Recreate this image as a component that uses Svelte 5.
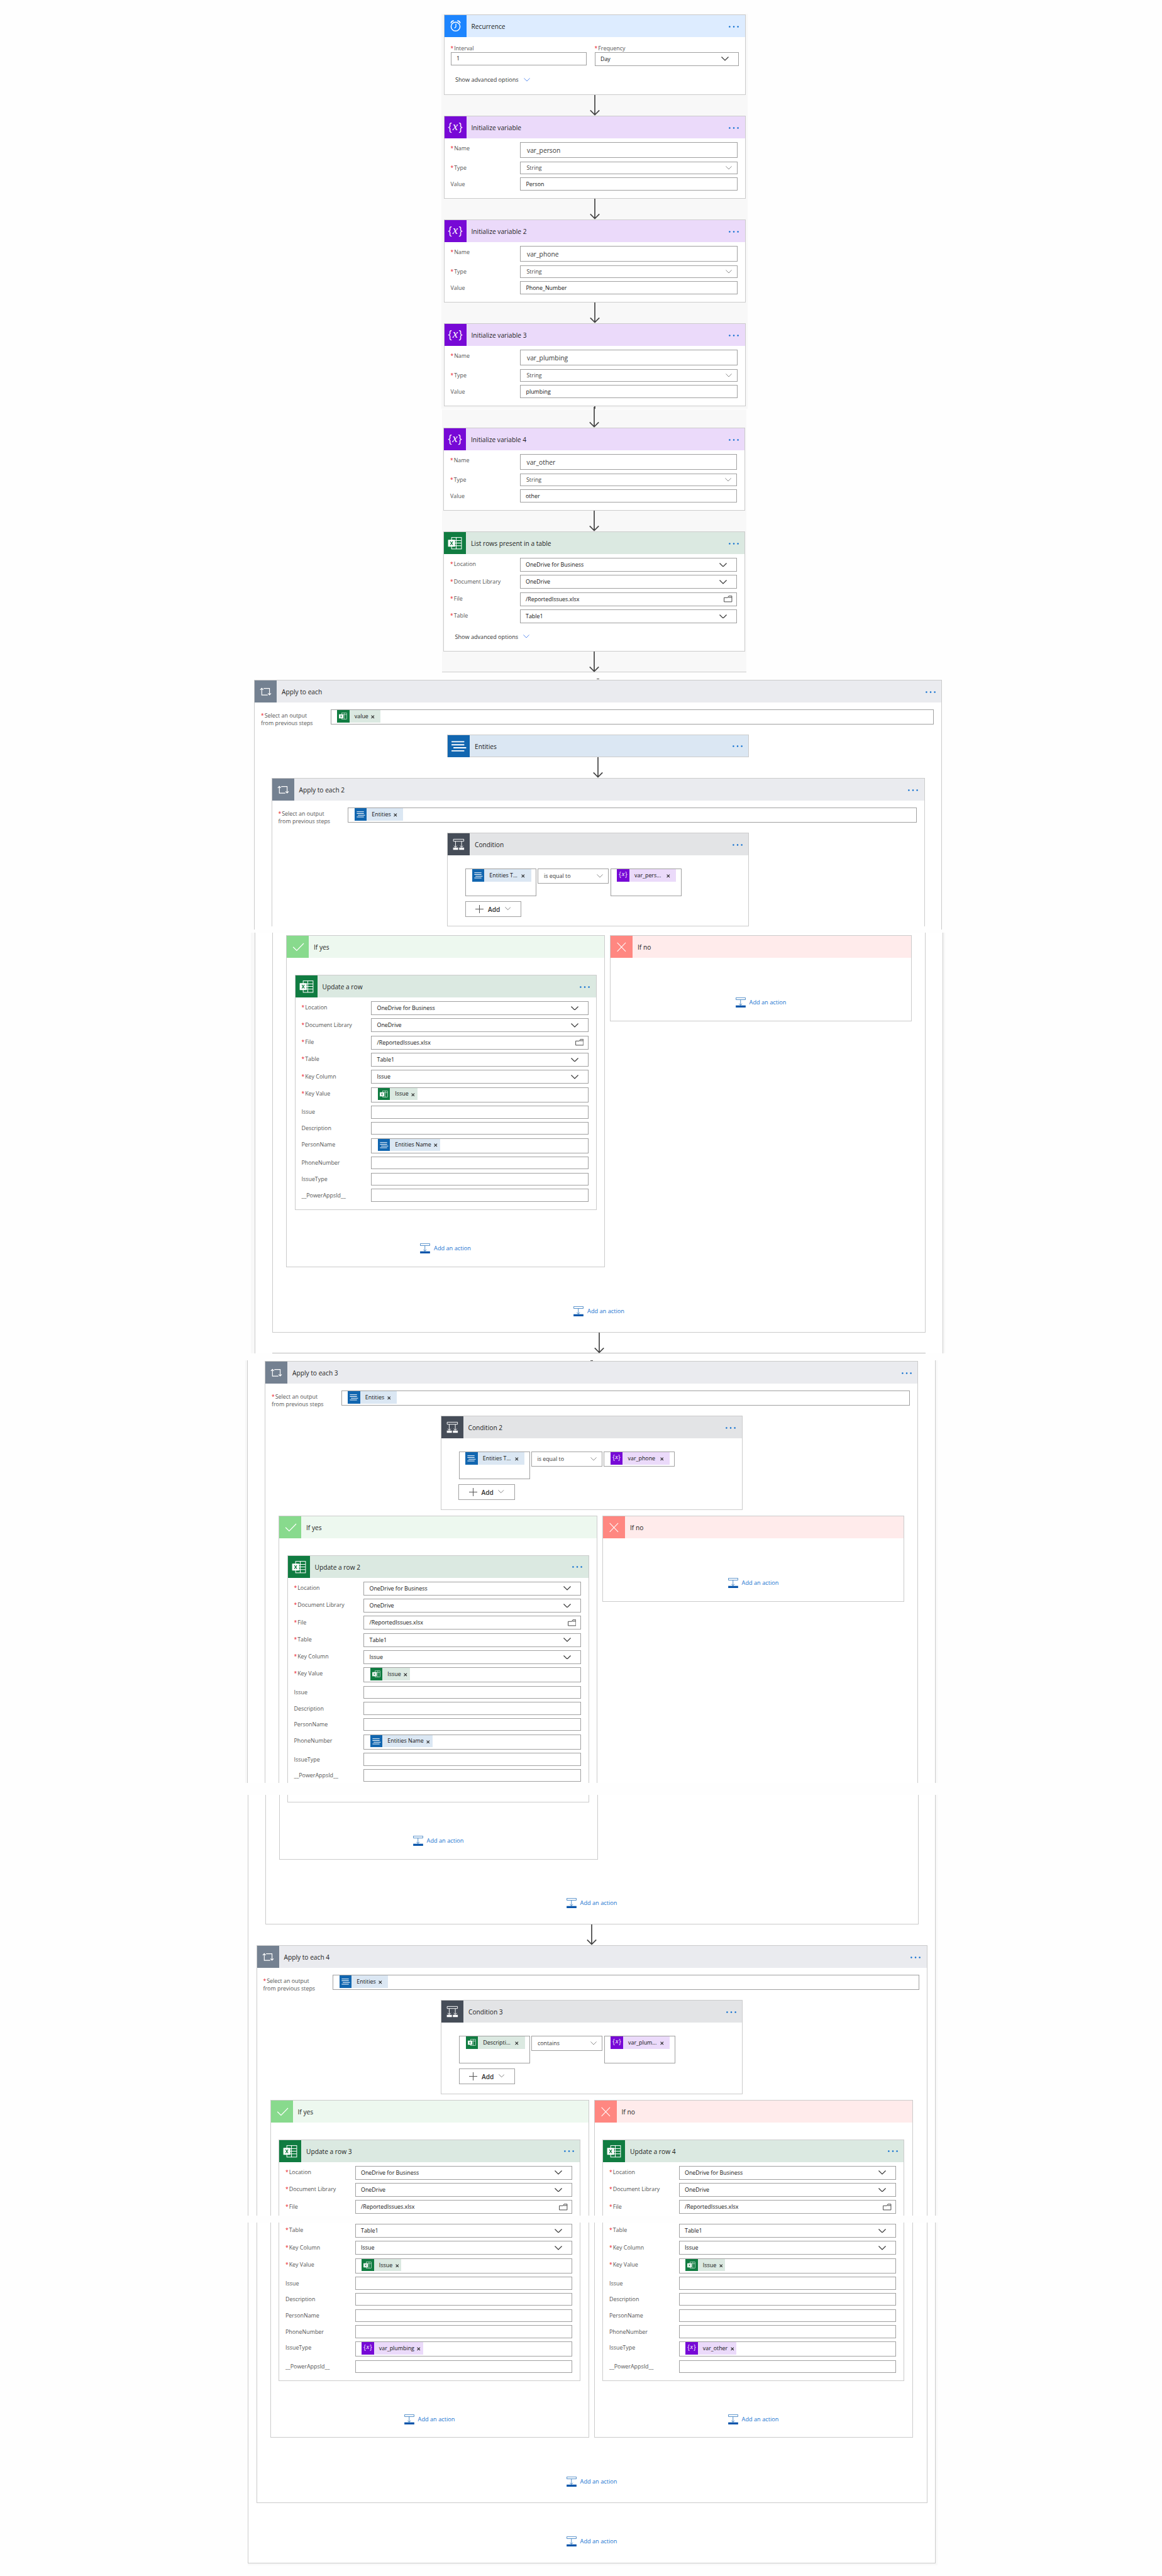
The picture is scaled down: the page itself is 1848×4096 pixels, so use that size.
<script>
  const variables = [
    { title: 'Initialize variable', name: 'var_person', value: 'Person' },
    { title: 'Initialize variable 2', name: 'var_phone', value: 'Phone_Number' },
    { title: 'Initialize variable 3', name: 'var_plumbing', value: 'plumbing' }
  ];
  const variable4 = { title: 'Initialize variable 4', name: 'var_other', value: 'other' };

  const issueToken = { kind: 'excel', text: 'Issue' };
  const entityName = { kind: 'entity', text: 'Entities Name' };

  const fileRows = [
    { label: 'Location', req: true, type: 'select', value: 'OneDrive for Business' },
    { label: 'Document Library', req: true, type: 'select', value: 'OneDrive' },
    { label: 'File', req: true, type: 'file', value: '/ReportedIssues.xlsx' }
  ];
  const tableRow = { label: 'Table', req: true, type: 'select', value: 'Table1' };

  // Column inputs of the "Update a row" action; `filled` maps a column to its token.
  function columnRows(filled) {
    return [
      tableRow,
      { label: 'Key Column', req: true, type: 'select', value: 'Issue' },
      { label: 'Key Value', req: true, type: 'token', token: issueToken },
      ...['Issue', 'Description', 'PersonName', 'PhoneNumber', 'IssueType', '__PowerAppsId__'].map((label) =>
        filled[label] ? { label, type: 'token', token: filled[label] } : { label, type: 'empty' }
      )
    ];
  }
</script>

{#snippet icon(kind)}
  {#if kind === 'variable'}
    <span class="braces"><b>&#123;</b><i>x</i><b>&#125;</b></span>
  {:else}
    <svg viewBox="0 0 69 69" fill="none" stroke="#fff">
      {#if kind === 'clock'}
        <circle cx="34.5" cy="36" r="14" stroke-width="3" />
        <path d="M35.5 27V37L31 41" stroke-width="2.6" />
        <path d="M20 25.5c1-4.500 5-7.500 9-7.500M49 25.500c-1-4.500-5-7.500-9-7.500" stroke-width="3.4" />
      {:else if kind === 'excel'}
        <rect x="24" y="17" width="31" height="36" stroke-width="2" />
        <path d="M24 26.500H55M24 34.500H55M24 43H55M38.500 17V53" stroke-width="2" />
        <rect x="13" y="24" width="22" height="22" rx="1" fill="#fff" stroke="none" />
        <path d="M20 29.500L28 40.500M28 29.500L20 40.500" stroke="#107c41" stroke-width="2.4" />
      {:else if kind === 'exceltoken'}
        <rect x="27" y="17" width="27" height="35" stroke-width="2" />
        <path d="M42 17V52M35 26H54" stroke-width="2" />
        <rect x="11" y="24" width="25" height="23" fill="#fff" stroke="none" />
        <path d="M19 30L27 41M27 30L19 41" stroke="#107c41" stroke-width="3.2" />
      {:else if kind === 'loop'}
        <path d="M22.300 25V45.500H41M17.500 29.500L22.300 24.300L27 29.500M28 25H46.500V44.500M41.700 40L46.500 45.200L51.300 40" stroke-width="2.300" />
      {:else if kind === 'entity'}
        <path d="M12 20.500H52M12 30H52M18 39.500H58M12 49.200H52" stroke-width="3.600" />
      {:else if kind === 'condition'}
        <path d="M18 18.500H50.500V25H18ZM24.500 25.500V43M43.500 25.500V43M19.500 39L24.500 44L29.500 39M38.500 39L43.500 44L48.500 39" stroke-width="1.900" />
        <path d="M17 45H32.800V51.800H17ZM36 45H51.500V51.800H36Z" fill="#fff" stroke="none" />
      {:else if kind === 'yes'}
        <path d="M20 35L31.300 46.300L53.300 23.700" stroke-width="2.300" />
      {:else if kind === 'no'}
        <path d="M21 21.500L47.500 49M47.500 21.500L21 49" stroke-width="2" />
      {/if}
    </svg>
  {/if}
{/snippet}

{#snippet header(kind, title, dots = true)}
  <header class="head {kind}">
    <span class="tile">{@render icon(kind)}</span>
    <h3>{title}</h3>
    {#if dots}
      <svg class="dots" viewBox="0 0 16 3"><circle cx="1.400" cy="1.500" r="1.250" /><circle cx="8" cy="1.500" r="1.250" /><circle cx="14.600" cy="1.500" r="1.250" /></svg>
    {/if}
  </header>
{/snippet}

{#snippet chevron(cls)}
  <svg class="chev {cls}" viewBox="0 0 12.400 6.800" fill="none"><path d="M.5.5L6.200 6.200L11.900.5" /></svg>
{/snippet}

{#snippet token(t)}
  <span class="token {t.kind}">
    <span class="tile">{@render icon(t.kind === 'excel' ? 'exceltoken' : t.kind)}</span>
    <span class="ttext">{t.text}</span>
    <svg class="x" viewBox="0 0 6 6"><path d="M.6.6L5.400 5.400M5.400.6L.6 5.400" /></svg>
  </span>
{/snippet}

{#snippet label(text, req)}
  <span class="label">{#if req}<em>*</em>{/if}{text}</span>
{/snippet}

{#snippet row(r)}
  <div class="row">
    {@render label(r.label, r.req)}
    <div class="box {r.type}">
      {#if r.token}{@render token(r.token)}{:else}<span>{r.value ?? ''}</span>{/if}
      {#if r.type === 'select'}{@render chevron('dark')}{/if}
      {#if r.type === 'file'}
        <svg class="folder" viewBox="0 0 14 11"><path d="M.6 3.400H6.500L8.300.7H13.400V10.300H.6ZM7.500 3H13.400" /></svg>
      {/if}
    </div>
  </div>
{/snippet}

{#snippet variable(v)}
  <article class="card">
    {@render header('variable', v.title)}
    <div class="rows vars">
      {@render row({ label: 'Name', req: true, type: 'name', value: v.name })}
      <div class="row">
        {@render label('Type', true)}
        <div class="box type"><span>String</span>{@render chevron('thin')}</div>
      </div>
      {@render row({ label: 'Value', type: 'value', value: v.value })}
    </div>
  </article>
{/snippet}

{#snippet advanced()}
  <div class="advanced"><span>Show advanced options</span>{@render chevron('blue')}</div>
{/snippet}

{#snippet arrow()}
  <svg class="arrow" viewBox="0 0 16 33" fill="none"><path d="M8 0V31.500M.8 24.300L8 31.500L15.200 24.300" /></svg>
{/snippet}

{#snippet action()}
  <div class="action">
    <svg viewBox="0 0 31 31.500" fill="none" stroke="#1f6cb8">
      <path d="M.8.8H30.200V7H.8ZM15 7.500V24M10 19.500L15 24.300L20 19.500" stroke-width="1.500" />
      <rect x="0" y="25" width="31" height="6.500" fill="#0a56ab" stroke="none" />
    </svg>
    <span>Add an action</span>
  </div>
{/snippet}

{#snippet selectOutput(t)}
  <div class="row output">
    <span class="label"><em>*</em>Select an output<br />from previous steps</span>
    <div class="box">{@render token(t)}</div>
  </div>
{/snippet}

{#snippet condition(title, left, op, right, cls)}
  <article class="card cond {cls}">
    {@render header('condition', title)}
    <div class="ops">
      <div class="box tall">{@render token(left)}</div>
      <div class="box operator"><span>{op}</span>{@render chevron('thin')}</div>
      <div class="box right">{@render token(right)}</div>
    </div>
    <div class="add">
      <svg class="plus" viewBox="0 0 13 13"><path d="M6.500 0V13M0 6.500H13" /></svg>
      <span>Add</span>
      {@render chevron('small')}
    </div>
  </article>
{/snippet}

{#snippet updateTop(title, rows, open)}
  <article class="card" class:open>
    {@render header('excel', title)}
    <div class="rows">{#each rows as r}{@render row(r)}{/each}</div>
  </article>
{/snippet}

{#snippet emptyNo()}
  <article class="card no-branch">
    {@render header('no', 'If no', false)}
    {@render action()}
  </article>
{/snippet}

<main>
  <section class="lane first">
    <article class="card recurrence">
      {@render header('clock', 'Recurrence')}
      <div class="pair">
        <div>{@render label('Interval', true)}<div class="box interval"><span>1</span></div></div>
        <div>{@render label('Frequency', true)}<div class="box freq"><span>Day</span>{@render chevron('dark')}</div></div>
      </div>
      {@render advanced()}
    </article>
    {@render arrow()}
    {#each variables as v}
      {@render variable(v)}
      {@render arrow()}
    {/each}
  </section>

  <section class="lane second">
    {@render arrow()}
    {@render variable(variable4)}
    {@render arrow()}
    <article class="card list">
      {@render header('excel', 'List rows present in a table')}
      <div class="rows">{#each [...fileRows, tableRow] as r}{@render row(r)}{/each}</div>
      {@render advanced()}
    </article>
    {@render arrow()}
  </section>

  <div class="tip one"></div>

  <section class="card apply apply-1">
    {@render header('loop', 'Apply to each')}
    {@render selectOutput({ kind: 'excel', text: 'value' })}
    <article class="card entities">{@render header('entity', 'Entities')}</article>
    {@render arrow()}
    <section class="card apply inner open">
      {@render header('loop', 'Apply to each 2')}
      {@render selectOutput({ kind: 'entity', text: 'Entities' })}
      {@render condition('Condition', { kind: 'entity', text: 'Entities T...' }, 'is equal to', { kind: 'variable', text: 'var_pers...' }, 'both')}
    </section>
  </section>

  <section class="strip strip-2">
    <div class="frame">
      <div class="inner-frame">
        <div class="branches">
          <article class="card yes-branch">
            {@render header('yes', 'If yes', false)}
            {@render updateTop('Update a row', [...fileRows, ...columnRows({ PersonName: entityName })], false)}
            {@render action()}
          </article>
          {@render emptyNo()}
        </div>
        {@render action()}
      </div>
      <div class="cut">{@render arrow()}</div>
    </div>
  </section>

  <section class="strip strip-3">
    <div class="frame">
      <div class="tip"></div>
      <section class="card apply inner open">
        {@render header('loop', 'Apply to each 3')}
        {@render selectOutput({ kind: 'entity', text: 'Entities' })}
        {@render condition('Condition 2', { kind: 'entity', text: 'Entities T...' }, 'is equal to', { kind: 'variable', text: 'var_phone' }, 'single')}
        <div class="branches">
          <article class="card yes-branch open">
            {@render header('yes', 'If yes', false)}
            {@render updateTop('Update a row 2', [...fileRows, ...columnRows({ PhoneNumber: entityName })], true)}
          </article>
          {@render emptyNo()}
        </div>
      </section>
    </div>
  </section>

  <section class="strip strip-4">
    <div class="frame">
      <div class="inner-frame rest">
        <div class="branches">
          <article class="card yes-branch tail">
            <div class="card stub"></div>
            {@render action()}
          </article>
        </div>
        {@render action()}
      </div>
      {@render arrow()}
      <section class="card apply wide open">
        {@render header('loop', 'Apply to each 4')}
        {@render selectOutput({ kind: 'entity', text: 'Entities' })}
        {@render condition('Condition 3', { kind: 'excel', text: 'Descripti...' }, 'contains', { kind: 'variable', text: 'var_plum...' }, 'both')}
        <div class="branches">
          <article class="card yes-branch open">
            {@render header('yes', 'If yes', false)}
            {@render updateTop('Update a row 3', fileRows, true)}
          </article>
          <article class="card yes-branch open">
            {@render header('no', 'If no', false)}
            {@render updateTop('Update a row 4', fileRows, true)}
          </article>
        </div>
      </section>
    </div>
  </section>

  <section class="strip strip-5">
    <div class="frame">
      <div class="inner-frame last">
        <div class="branches">
          {#each ['var_plumbing', 'var_other'] as name}
            <article class="card yes-branch tail">
              <div class="card columns">
                <div class="rows">
                  {#each columnRows({ IssueType: { kind: 'variable', text: name } }) as r}{@render row(r)}{/each}
                </div>
              </div>
              {@render action()}
            </article>
          {/each}
        </div>
        {@render action()}
      </div>
      {@render action()}
    </div>
  </section>
</main>

<style>
  :global(body) { background: #fefefe; }
  main, main :global(*) { box-sizing: border-box; }
  main {
    width: 1848px;
    height: 4096px;
    overflow: hidden;
    display: flex;
    flex-direction: column;
    align-items: flex-start;
    padding-top: 22px;
    font-family: 'Open Sans', 'Noto Sans', sans-serif;
    font-size: 8.9px;
    color: #111;
  }
  svg { display: block; flex: none; }

  /* Cards and headers */
  .card { background: #fff; border: 1px solid #cbcbcb; flex: none; width: 480px; display: flex; flex-direction: column; }
  .head { height: 35px; display: flex; align-items: center; flex: none; }
  .tile { display: grid; place-items: center; flex: none; width: 35px; height: 35px; color: #fff; }
  .tile svg { width: 100%; height: 100%; }
  h3 { margin: 1px 0 0 8px; font-size: 10.200px; font-weight: 400; line-height: 14px; flex: 1; color: #1c1c1c; white-space: nowrap; }
  .dots { width: 16px; height: 3px; margin-right: 9.400px; margin-top: 1px; fill: #0f6fd0; }
  .clock { background: #ddecff; }
  .clock .tile { background: #1d85ff; }
  .variable { background: #ebdafa; }
  .variable .tile { background: #7709d6; }
  .excel { background: #dbe9e1; }
  .excel .tile { background: #107c41; }
  .loop { background: #eaebef; }
  .loop .tile { background: #748191; }
  .entity { background: #dbe7f3; }
  .entity .tile { background: #1166b0; }
  .condition { background: #e3e4e6; }
  .condition .tile { background: #464d58; }
  .yes { background: #edf8ef; }
  .yes .tile { background: #88da8d; }
  .no { background: #ffebeb; }
  .no .tile { background: #ff8781; }
  .braces { display: flex; align-items: center; font-size: 18px; line-height: 20px; margin-top: -4px; }
  .braces b { font: 400 19px/20px 'Open Sans', sans-serif; transform: scaleX(.85); }
  .braces i { font: italic 19px/20px 'Liberation Serif', serif; margin: 0 .5px; }

  /* Form rows */
  .rows { display: flex; flex-direction: column; gap: 5.300px; padding: 6.200px 12px 0 10px; }
  .row { display: grid; grid-template-columns: 110.500px 1fr; flex: none; }
  .label { line-height: 20px; padding-top: .3px; color: #555; white-space: nowrap; }
  .label em { display: inline-block; width: 5.700px; color: #e81123; font-style: normal; font-size: 8.500px; }
  .box { border: 1px solid #a0a0a0; height: 22px; display: flex; align-items: center; justify-content: space-between; padding-left: 8.500px; background: #fff; line-height: 12px; white-space: nowrap; }
  .box > span { flex: none; }
  .box.empty { height: 20.400px; }
  .box.token { height: 24.200px; align-items: flex-start; background: #fff; }
  .box.name { height: 25px; font-size: 10.300px; padding-left: 10px; color: #383838; }
  .box.type { height: 20px; padding-left: 9.500px; color: #484848; }
  .box.value { height: 21px; }
  .vars { gap: 6px; padding-top: 6px; }
  .vars .row:nth-child(3) { margin-top: -1px; }
  .chev path { stroke: #333; stroke-width: 1.200; }
  .chev.dark { width: 12px; height: 6.600px; margin-right: 15px; }
  .chev.thin { width: 10px; height: 5.500px; margin-right: 8px; }
  .chev.thin path { stroke: #8a8a8a; }
  .chev.blue { width: 10px; height: 5.500px; }
  .chev.blue path { stroke: #5b8def; }
  .chev.small { width: 9.500px; height: 5.200px; }
  .chev.small path { stroke: #777; }
  .folder { width: 13.500px; height: 10.600px; margin-right: 6.500px; fill: none; stroke: #444; stroke-width: 1; }
  .advanced { display: flex; align-items: center; gap: 8px; height: 14px; padding-left: 17.500px; color: #333; }
  .advanced span { font-size: 9.100px; }

  .token.excel, .token.entity, .token.variable { display: flex; align-items: center; height: 19.500px; padding-right: 4px; margin-left: 1px; }
  .token .tile { width: 19.500px; height: 19.500px; }
  .ttext { margin: 0 4.500px 0 8.300px; }
  .x { width: 5.600px; height: 5.600px; margin-top: 2px; fill: none; stroke: #222; stroke-width: 1.100; }
  .token .braces { margin-top: -3px; }
  .token .braces b { font-size: 10.500px; line-height: 12px; }
  .token .braces i { font-size: 10.500px; line-height: 12px; }

  /* Linear part */
  .lane { background: #f8f8f8; display: flex; flex-direction: column; align-items: center; flex: none; overflow: hidden; }
  .lane.first { margin-left: 702px; width: 487px; height: 628px; padding-top: 1px; }
  .lane.second { margin: 1px 0 0 703px; width: 484px; height: 418px; overflow: visible; border-bottom: 1px solid #ccc; }
  .lane .arrow { height: 33px; flex: none; }
  .lane.second > .arrow:first-child { margin-top: -4px; }
  .lane .card { height: 132px; }
  .lane .recurrence { height: 128px; }
  .lane .list { height: 191px; }
  .list .advanced { margin-top: 14px; }
  .recurrence .advanced { margin-top: 15.500px; }
  .arrow { width: 16px; height: 33px; flex: none; }
  .arrow path { stroke: #444; stroke-width: 1.700; }
  .pair { display: grid; grid-template-columns: 216px 229px; gap: 13px; padding: 12px 0 0 10px; height: 45px; }
  .pair .label { display: block; line-height: 12px; padding-top: 0; }
  .box.interval { height: 20.500px; }
  .box.freq { height: 21.500px; }
  .tip { width: 4px; height: 1px; background: #555; flex: none; }
  .tip.one { margin: 10px 0 1px 949px; }

  /* Loops */
  .apply { align-items: center; }
  .apply > .head { align-self: stretch; }
  .apply-1 { margin-left: 404px; width: 1094px; height: 397px; border-bottom: 0; overflow: hidden; }
  .inner { width: 1039px; }
  .wide { width: 1067px; }
  .open { border-bottom: 0; }
  .output { align-self: stretch; padding: 11px 12px 0 10px; }
  .output .label { line-height: 12.100px; padding-top: 4.300px; margin-bottom: -10px; }
  .output .box { height: 24px; align-items: flex-start; }
  .output .token, .ops .token { padding-right: 9.500px; }
  .output .x, .ops .x { margin-top: 3px; }
  .entities { margin-top: 16px; height: 36px; }
  .entities .head { height: 34px; }
  .cond { margin-top: 16px; height: 150px; }
  .apply-1 .cond { height: 149px; }
  .ops { display: flex; gap: 2.400px; align-items: flex-start; padding: 21px 0 0 28px; height: 72.500px; }
  .ops .box { width: 113px; height: 24px; align-items: flex-start; }
  .ops .box.operator { align-items: center; color: #383838; }
  .ops .tall, .both .ops .right { height: 43.500px; }
  .ops .token { width: 94px; }
  .ops .ttext { flex: 1; }
  .add { margin-left: 27.500px; width: 89.500px; height: 25px; border: 1px solid #a0a0a0; display: flex; align-items: center; padding-left: 15.500px; }
  .plus { width: 13px; height: 13px; stroke: #555; stroke-width: 1; }
  .add span { font-size: 10.200px; font-weight: 600; margin: 1px 7.500px 0 7px; color: #333; }

  .strip { background: #f8f8f8; display: flex; flex: none; overflow: hidden; }
  .frame { flex: 1; background: #fff; border: solid #cbcbcb; border-width: 0 1px; display: flex; flex-direction: column; align-items: center; }
  .strip-2 { margin: 5px 0 0 399px; width: 1104px; height: 669px; padding: 0 3px 0 6px; }
  .strip-3 { margin: 11px 0 0 390px; width: 1101px; height: 672px; padding: 0 3px; }
  .strip-4 { margin: 19px 0 0 394px; width: 1097px; height: 669px; padding-right: 3px; }
  .strip-5 { margin: 11px 0 0 394px; width: 1097px; height: 545px; padding: 0 3px 3px 0; }
  .strip-5 .frame { border-bottom-width: 1px; }
  .inner-frame { width: 1039px; height: 636px; border: 1px solid #cbcbcb; border-top: 0; padding-top: 4px; display: flex; flex-direction: column; align-items: center; flex: none; }
  .inner-frame.rest { height: 206px; padding-top: 0; }
  .inner-frame.last { width: 1067px; height: 446px; padding-top: 0; }
  .cut { width: 1039px; height: 33px; display: flex; justify-content: center; border-bottom: 1px solid #bbb; }
  .branches { display: flex; gap: 8px; align-items: flex-start; flex: none; width: 995px; }
  .wide .branches, .last .branches { width: 1023px; }
  .apply > .branches { margin-top: 8.500px; }
  .yes-branch { width: 507px; height: 528px; align-items: center; }
  .yes-branch > .head { align-self: stretch; margin-bottom: 27px; }
  .yes-branch > .card { height: 374px; }
  .yes-branch.tail { border-top: 0; height: 103px; }
  .yes-branch > .card.stub { height: 12px; border-top: 0; }
  .last .yes-branch.tail { height: 342px; }
  .yes-branch > .card.columns { height: 251.500px; border-top: 0; }
  .columns .rows { padding-top: 2.200px; }
  .no-branch { height: 137px; }
  .no-branch .action { align-self: center; margin-top: 63px; }

  .action { display: flex; align-items: center; gap: 6px; height: 16px; color: #1a74d0; flex: none; }
  .action svg { width: 16px; height: 16px; }
  .action span { font-size: 9.200px; line-height: 12px; }
  .yes-branch > .action { margin-top: 53px; }
  .inner-frame > .action { margin-top: 61.500px; }
  .rest > .action { margin-top: 61px; }
  .frame > .action { margin-top: 53px; }
</style>
